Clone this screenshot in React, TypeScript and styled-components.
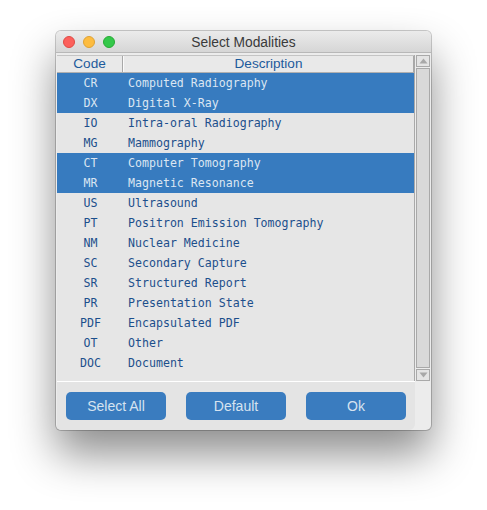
import * as React from "react";
import styled, {createGlobalStyle} from "styled-components";

const GlobalStyle = createGlobalStyle`
  html, body {
    margin: 0;
    background: #ffffff;
  }
`

const modalities = [
    {code: "CR", desc: "Computed Radiography", on: true},
    {code: "DX", desc: "Digital X-Ray", on: true},
    {code: "IO", desc: "Intra-oral Radiography", on: false},
    {code: "MG", desc: "Mammography", on: false},
    {code: "CT", desc: "Computer Tomography", on: true},
    {code: "MR", desc: "Magnetic Resonance", on: true},
    {code: "US", desc: "Ultrasound", on: false},
    {code: "PT", desc: "Positron Emission Tomography", on: false},
    {code: "NM", desc: "Nuclear Medicine", on: false},
    {code: "SC", desc: "Secondary Capture", on: false},
    {code: "SR", desc: "Structured Report", on: false},
    {code: "PR", desc: "Presentation State", on: false},
    {code: "PDF", desc: "Encapsulated PDF", on: false},
    {code: "OT", desc: "Other", on: false},
    {code: "DOC", desc: "Document", on: false},
]

const App: React.FunctionComponent = () => {
    return (
        <Stage>
            <GlobalStyle/>
            <Window>
                <TitleBar>
                    <Lights>
                        <Light color="#fc605c" edge="#de4a44"/>
                        <Light color="#fdbc40" edge="#dea234"/>
                        <Light color="#34c84a" edge="#27aa35"/>
                    </Lights>
                    <Title>Select Modalities</Title>
                </TitleBar>
                <TableArea>
                    <List>
                        <HeaderRow>
                            <HeadCell className="code">Code</HeadCell>
                            <HeadCell>Description</HeadCell>
                        </HeaderRow>
                        {modalities.map(m => (
                            <Row key={m.code} selected={m.on}>
                                <CodeCell>{m.code}</CodeCell>
                                <DescCell>{m.desc}</DescCell>
                            </Row>
                        ))}
                    </List>
                    <ScrollBar>
                        <Arrow>
                            <svg width="9" height="6" viewBox="0 0 9 6"><path d="M0.5 5.5 L4.5 0.5 L8.5 5.5 Z" fill="#a8a8a8"/></svg>
                        </Arrow>
                        <Thumb/>
                        <Arrow>
                            <svg width="9" height="6" viewBox="0 0 9 6"><path d="M0.5 0.5 L4.5 5.5 L8.5 0.5 Z" fill="#a8a8a8"/></svg>
                        </Arrow>
                    </ScrollBar>
                </TableArea>
                <ButtonBar>
                    <Button>Select All</Button>
                    <Button>Default</Button>
                    <Button>Ok</Button>
                </ButtonBar>
            </Window>
        </Stage>
    )
}

const Stage = styled.div`
  width: 487px;
  height: 510px;
  padding: 31px 0 0 56px;
  box-sizing: border-box;
  font-family: "Liberation Sans", Arial, sans-serif;
`

const Window = styled.div`
  width: 375px;
  height: 399px;
  box-sizing: border-box;
  background: #ececec;
  border-radius: 5px;
  box-shadow: 0 0 0 1px rgba(0, 0, 0, 0.2), 0 24px 44px rgba(0, 0, 0, 0.45);
  display: flex;
  flex-direction: column;
  overflow: hidden;
`

const TitleBar = styled.div`
  height: 22px;
  box-sizing: border-box;
  background: linear-gradient(#ebebeb, #d6d6d6);
  border-bottom: 1px solid #b8b8b8;
  position: relative;
  display: flex;
  align-items: center;
  justify-content: center;
`

const Lights = styled.div`
  position: absolute;
  left: 7px;
  top: 5px;
  display: flex;
  gap: 8px;
`

const Light = styled.span<{color: string; edge: string}>`
  width: 12px;
  height: 12px;
  border-radius: 50%;
  box-sizing: border-box;
  background: ${p => p.color};
  border: 0.5px solid ${p => p.edge};
`

const Title = styled.div`
  font-size: 13.8px;
  color: #3a3a3a;
  margin-top: 1px;
`

const TableArea = styled.div`
  margin-top: 2px;
  height: 326px;
  display: flex;
  padding: 0 1px;
`

const List = styled.div`
  width: 358px;
  background: #e6e6e6;
  border-right: 1px solid #a9a9a9;
  box-sizing: border-box;
`

const HeaderRow = styled.div`
  display: grid;
  grid-template-columns: 66px 1fr;
  height: 18px;
  box-sizing: border-box;
  border-top: 1px solid #c4c4c4;
  border-bottom: 1px solid #b0b0b0;
  background: #e9e9e9;
`

const HeadCell = styled.div`
  font-size: 13.6px;
  line-height: 16px;
  color: #1d5b9c;
  text-align: center;
  border-left: 1px solid #fafafa;
  border-right: 1px solid #a8a8a8;

  &.code {
    border-left: none;
  }
`

const Row = styled.div<{selected: boolean}>`
  display: grid;
  grid-template-columns: 67px 1fr;
  height: 20px;
  align-items: center;
  font-family: "DejaVu Sans Mono", "Liberation Mono", monospace;
  font-size: 11.6px;
  background: ${p => p.selected ? "#377bbf" : "transparent"};
  color: ${p => p.selected ? "#dbe6f2" : "#1c4f8c"};
`

const CodeCell = styled.div`
  text-align: center;
`

const DescCell = styled.div`
  padding-left: 4px;
  white-space: nowrap;
`

const ScrollBar = styled.div`
  width: 15px;
  display: flex;
  flex-direction: column;
  background: #ececec;
  padding-left: 1px;
  box-sizing: border-box;
`

const Arrow = styled.div`
  height: 12px;
  box-sizing: border-box;
  border: 1px solid #a9a9a9;
  background: #e4e4e4;
  display: flex;
  align-items: center;
  justify-content: center;
`

const Thumb = styled.div`
  flex: 1;
  margin: 1px 0;
  background: #d9d9d9;
  border: 1px solid #a9a9a9;
`

const ButtonBar = styled.div`
  flex: 1;
  width: 358px;
  margin-left: 1px;
  box-sizing: border-box;
  background: #e4e4e4;
  border-top: 1px solid #ffffff;
  border-bottom-left-radius: 4px;
  border-bottom-right-radius: 6px;
  display: flex;
  gap: 20px;
  padding: 10px 9px 0;
`

const Button = styled.button`
  width: 100px;
  height: 28px;
  border: none;
  border-radius: 5px;
  background: #3a7cbf;
  color: #d6e3f0;
  font-family: "Liberation Sans", Arial, sans-serif;
  font-size: 14px;
  padding: 0;
`

export default App
